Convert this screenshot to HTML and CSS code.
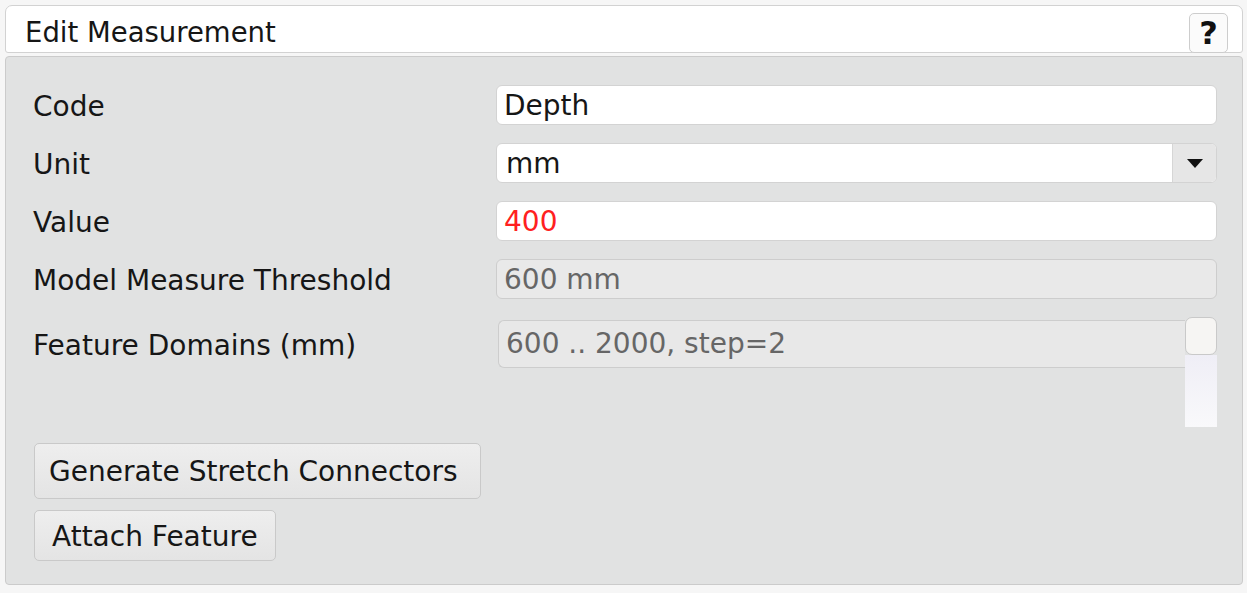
FILE: index.html
```html
<!DOCTYPE html>
<html>
<head>
<meta charset="utf-8">
<title>Edit Measurement</title>
<link rel="stylesheet" href="styles.css">
</head>
<body>
<div class="dialog">
  <div class="header">
    <span class="title">Edit Measurement</span>
    <button class="help">?</button>
  </div>
  <div class="panel">
    <div class="form">
      <label class="label">Code</label>
      <div class="field">Depth</div>

      <label class="label">Unit</label>
      <div class="select">
        <div class="select-value">mm</div>
        <div class="select-btn"><span class="tri"></span></div>
      </div>

      <label class="label">Value</label>
      <div class="field error">400</div>

      <label class="label">Model Measure Threshold</label>
      <div class="field disabled">600 mm</div>

      <label class="label label-top">Feature Domains (mm)</label>
      <div class="listwrap">
        <div class="listbox">600 .. 2000, step=2</div>
        <div class="scrollbar">
          <div class="thumb"></div>
          <div class="track"></div>
        </div>
      </div>
    </div>
    <div class="actions">
      <button class="btn btn-wide">Generate Stretch Connectors</button>
      <button class="btn btn-attach">Attach Feature</button>
    </div>
  </div>
</div>
</body>
</html>
```

FILE: styles.css
```css
* { box-sizing: border-box; }

html, body {
  margin: 0;
  padding: 0;
  background: #f6f6f6;
}

body {
  padding: 5px 4px 0 5px;
  font-family: "DejaVu Sans", Verdana, sans-serif;
  font-size: 28px;
  color: #161616;
}

.dialog {
  display: flex;
  flex-direction: column;
  gap: 3px;
}

.header {
  height: 48px;
  background: #ffffff;
  border: 1px solid #d2d2d2;
  border-radius: 7px 7px 3px 3px;
  display: flex;
  justify-content: space-between;
  align-items: center;
  padding: 0 14px 0 19px;
}

.title {
  line-height: 1;
  margin-top: 7px;
  font-size: 27.5px;
}

.help {
  align-self: flex-end;
  width: 39px;
  height: 40px;
  margin-bottom: -1px;
  background: #fbfbfb;
  border: 1px solid #cdcdcd;
  border-radius: 5px;
  font-family: "DejaVu Sans", Verdana, sans-serif;
  font-weight: bold;
  font-size: 32px;
  color: #111;
  padding: 0;
  line-height: 1;
}

.panel {
  height: 529px;
  background: #e1e2e2;
  border: 1px solid #cbcbcb;
  border-radius: 4px;
  padding: 28px 25px 0 27px;
  display: flex;
  flex-direction: column;
  gap: 16px;
}

.form {
  display: grid;
  grid-template-columns: 463px 1fr;
  row-gap: 18px;
  align-items: center;
}

.label {
  line-height: 1;
  margin-top: 4px;
}

.label-top {
  align-self: start;
  margin-top: 15px;
}

.field {
  height: 40px;
  background: #ffffff;
  border: 1px solid #d3d3d3;
  border-radius: 6px;
  padding: 2px 7px 0;
  display: flex;
  align-items: center;
  line-height: 1;
}

.field.error { color: #ff2020; }

.field.disabled {
  background: #e9e9e9;
  border-color: #cdcdcd;
  color: #666;
}

.select {
  height: 40px;
  display: flex;
  border: 1px solid #d3d3d3;
  border-radius: 6px;
  background: #ffffff;
  overflow: hidden;
}

.select-value {
  flex: 1;
  display: flex;
  align-items: center;
  padding: 2px 9px 0;
  line-height: 1;
}

.select-btn {
  width: 44px;
  background: #e6e6e6;
  border-left: 1px solid #d6d6d6;
  display: flex;
  align-items: center;
  justify-content: center;
}

.tri {
  width: 0;
  height: 0;
  border-left: 8px solid transparent;
  border-right: 8px solid transparent;
  border-top: 9px solid #111;
}

.listwrap {
  display: flex;
  align-items: flex-start;
  padding-left: 2px;
}

.listbox {
  flex: 1;
  height: 48px;
  margin-top: 3px;
  background: #e8e8e8;
  border: 1px solid #cdcdcd;
  border-right: none;
  border-radius: 6px 0 0 6px;
  display: flex;
  align-items: center;
  padding: 0 7px;
  color: #666;
  line-height: 1;
}

.scrollbar {
  width: 32px;
  height: 110px;
  display: flex;
  flex-direction: column;
}

.thumb {
  height: 38px;
  background: #f6f5f3;
  border: 1px solid #c9c9c9;
  border-radius: 7px;
}

.track {
  flex: 1;
  background: linear-gradient(#efeef6, #f9f9fb);
}

.actions {
  display: flex;
  flex-direction: column;
  align-items: flex-start;
  gap: 11px;
}

.btn {
  font-family: "DejaVu Sans", Verdana, sans-serif;
  font-size: 28px;
  color: #161616;
  background: linear-gradient(#eeeeee, #e4e4e4);
  border: 1px solid #c9c9c9;
  border-radius: 5px;
  white-space: nowrap;
  overflow: hidden;
  text-align: left;
  line-height: 1;
  margin-left: 1px;
}

.btn-wide {
  width: 447px;
  height: 56px;
  padding: 2px 0 0 14px;
}

.btn-attach {
  width: 242px;
  height: 51px;
  padding: 2px 0 0 17px;
}
```
